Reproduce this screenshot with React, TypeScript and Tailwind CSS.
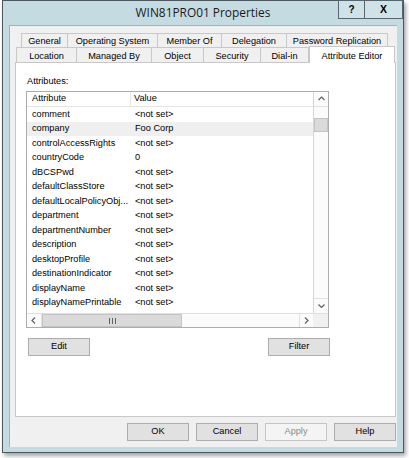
import React from "react";

const rows: [string, string][] = [
  ["comment", "<not set>"],
  ["company", "Foo Corp"],
  ["controlAccessRights", "<not set>"],
  ["countryCode", "0"],
  ["dBCSPwd", "<not set>"],
  ["defaultClassStore", "<not set>"],
  ["defaultLocalPolicyObj...", "<not set>"],
  ["department", "<not set>"],
  ["departmentNumber", "<not set>"],
  ["description", "<not set>"],
  ["desktopProfile", "<not set>"],
  ["destinationIndicator", "<not set>"],
  ["displayName", "<not set>"],
  ["displayNamePrintable", "<not set>"],
];

const topTabs = [
  { label: "General", w: 47 },
  { label: "Operating System", w: 90 },
  { label: "Member Of", w: 64 },
  { label: "Delegation", w: 65 },
  { label: "Password Replication", w: 101 },
];

const bottomTabs = [
  { label: "Location", w: 61 },
  { label: "Managed By", w: 75 },
  { label: "Object", w: 52 },
  { label: "Security", w: 57 },
  { label: "Dial-in", w: 48 },
];

function Chevron({ dir }: { dir: "up" | "down" | "left" | "right" }) {
  const paths: Record<string, string> = {
    up: "M1.5 5 L4.5 2 L7.5 5",
    down: "M1.5 2.5 L4.5 5.5 L7.5 2.5",
    left: "M5 1.5 L2 4.5 L5 7.5",
    right: "M3 1.5 L6 4.5 L3 7.5",
  };
  return (
    <svg width="9" height="9" viewBox="0 0 9 9">
      <path d={paths[dir]} fill="none" stroke="#606060" strokeWidth="1.2" />
    </svg>
  );
}

function DlgButton({ label, disabled, w }: { label: string; disabled?: boolean; w: string }) {
  return (
    <div
      className={`${w} h-[18px] flex items-center justify-center border ${
        disabled ? "border-[#c4c4c4] bg-[#f4f4f4] text-[#8a8a8a]" : "border-[#adadad] bg-[#e1e1e1] text-black"
      }`}
    >
      {label}
    </div>
  );
}

export default function App() {
  return (
    <div
      className="w-[409px] h-[458px] bg-white pl-[2px] text-[9.2px] leading-none text-black"
      style={{ fontFamily: '"Liberation Sans", Arial, sans-serif' }}
    >
      <div className="w-[402px] h-[453px] border border-[#4a585e] bg-[#c4dbe1] flex flex-col shadow-[2px_3px_4px_rgba(0,0,0,0.35)]">
        {/* caption */}
        <div className="h-[24px] relative flex items-center justify-center shrink-0">
          <span
            className="text-[11.9px] text-[#1a1a1a] -mt-[1px]"
            style={{ fontFamily: '"Open Sans", "Noto Sans", sans-serif' }}
          >
            WIN81PRO01 Properties
          </span>
          <div className="absolute -top-[1px] right-0 flex h-[19px]">
            <div className="w-[27px] h-full border border-[#56666c] bg-[#cfe2e7] flex items-center justify-center font-bold text-[10px]">
              ?
            </div>
            <div className="w-[38px] h-full border border-l-0 border-[#56666c] bg-[#cfe2e7] flex items-center justify-center font-bold text-[10.5px]">
              X
            </div>
          </div>
        </div>

        {/* client area */}
        <div className="mx-[6px] mb-[5px] flex-1 bg-[#f0f0f0] border-t border-l border-[#9fb3b9] flex flex-col">
          <div className="pt-[7px]">
            <div className="flex ml-[11px] h-[14px]">
              {topTabs.map((t, i) => (
                <div
                  key={t.label}
                  className={`h-full border-t border-r border-[#c8c8c8] bg-[#f0f0f0] flex items-center justify-center pt-[3px] ${
                    i === 0 ? "border-l" : ""
                  }`}
                  style={{ width: t.w }}
                >
                  {t.label}
                </div>
              ))}
            </div>
            <div className="flex ml-[6px] h-[15px] items-end">
              {bottomTabs.map((t, i) => (
                <div
                  key={t.label}
                  className={`h-[15px] border-t border-r border-[#c8c8c8] bg-[#f0f0f0] flex items-center justify-center pt-[3px] ${
                    i === 0 ? "border-l" : ""
                  }`}
                  style={{ width: t.w }}
                >
                  {t.label}
                </div>
              ))}
              <div className="w-[86px] h-[17px] -mb-[1px] border border-b-0 border-[#c8c8c8] bg-white flex items-start justify-center pt-[5px] relative z-10">
                Attribute Editor
              </div>
            </div>
          </div>

          {/* tab page */}
          <div className="ml-[5px] w-[381px] h-[355px] bg-white border border-[#c8c8c8] flex flex-col">
            <div className="ml-[11px] mt-[14px] h-[10px] flex items-center">Attributes:</div>
            <div className="ml-[10px] mt-[4px] w-[303px] h-[237px] border border-[#acacac] flex flex-col">
              <div className="flex flex-1 min-h-0">
                {/* rows */}
                <div className="w-[286px] flex flex-col overflow-hidden">
                  <div className="h-[15px] border-b border-[#e5e5e5] flex shrink-0">
                    <div className="w-[104px] border-r border-[#e5e5e5] pl-[5px] flex items-center">Attribute</div>
                    <div className="pl-[3px] flex items-center">Value</div>
                  </div>
                  {rows.map(([a, v]) => (
                    <div
                      key={a}
                      className={`h-[14.5px] flex items-center shrink-0 ${a === "company" ? "bg-[#efefef]" : ""}`}
                    >
                      <div className="w-[104px] pl-[5px]">{a}</div>
                      <div className="pl-[4px]">{v}</div>
                    </div>
                  ))}
                </div>
                {/* vertical scrollbar */}
                <div className="w-[15px] border-l border-[#d6d6d6] bg-[#fbfbfb] flex flex-col">
                  <div className="h-[15px] border-b border-[#e0e0e0] flex items-center justify-center">
                    <Chevron dir="up" />
                  </div>
                  <div className="mt-[11px] h-[14px] bg-[#dadada] border border-[#c4c4c4]" />
                  <div className="flex-1" />
                  <div className="h-[15px] border-t border-[#e0e0e0] flex items-center justify-center">
                    <Chevron dir="down" />
                  </div>
                </div>
              </div>
              {/* horizontal scrollbar */}
              <div className="h-[14px] flex border-t border-[#e0e0e0] shrink-0">
                <div className="w-[15px] border-r border-[#e0e0e0] bg-[#fbfbfb] flex items-center justify-center">
                  <Chevron dir="left" />
                </div>
                <div className="w-[140px] bg-[#dadada] border border-[#c4c4c4] flex items-center justify-center gap-[2px]">
                  <div className="w-[1px] h-[6px] bg-[#606060]" />
                  <div className="w-[1px] h-[6px] bg-[#606060]" />
                  <div className="w-[1px] h-[6px] bg-[#606060]" />
                </div>
                <div className="flex-1 bg-[#fbfbfb]" />
                <div className="w-[14px] border-l border-[#e0e0e0] bg-[#fbfbfb] flex items-center justify-center">
                  <Chevron dir="right" />
                </div>
                <div className="w-[15px] bg-[#f0f0f0]" />
              </div>
            </div>
            <div className="ml-[11px] mt-[10px] w-[303px] flex justify-between pl-[1px]">
              <DlgButton label="Edit" w="w-[62px]" />
              <DlgButton label="Filter" w="w-[62px]" />
            </div>
          </div>

          {/* dialog buttons */}
          <div className="mt-[6px] ml-[117px] flex gap-[7px]">
            <DlgButton label="OK" w="w-[62px]" />
            <DlgButton label="Cancel" w="w-[62px]" />
            <DlgButton label="Apply" w="w-[62px]" disabled />
            <DlgButton label="Help" w="w-[62px]" />
          </div>
        </div>
      </div>
    </div>
  );
}
